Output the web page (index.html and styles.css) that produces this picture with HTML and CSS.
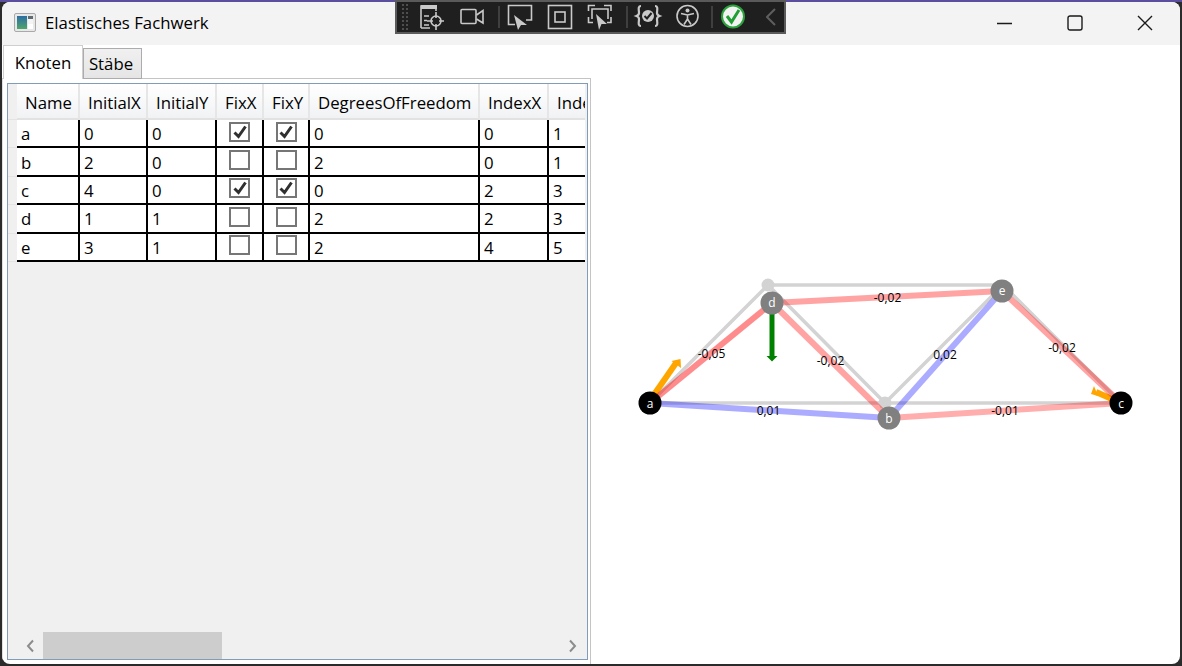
FILE: index.html
```html
<!DOCTYPE html>
<html lang="de">
<head>
<meta charset="utf-8">
<title>Elastisches Fachwerk</title>
<link rel="stylesheet" href="styles.css">
</head>
<body>
<div class="window">
  <header class="titlebar">
    <div class="appicon"><span class="appicon-left"></span><span class="appicon-right"></span></div>
    <span class="title">Elastisches Fachwerk</span>
    <div class="caption">
      <button class="capbtn"><svg width="16" height="16" viewBox="0 0 16 16"><path d="M0 8.500H15" class="capstroke"/></svg></button>
      <button class="capbtn"><svg width="16" height="16" viewBox="0 0 16 16"><rect x="1" y="1" width="14" height="14" rx="2" class="capstroke"/></svg></button>
      <button class="capbtn"><svg width="16" height="16" viewBox="0 0 16 16"><path d="M1 1L15 15M15 1L1 15" class="capstroke"/></svg></button>
    </div>
  </header>
  <main class="content">
    <section class="leftpane">
      <div class="tabs">
        <div class="tab tab-active">Knoten</div>
        <div class="tab tab-idle">Stäbe</div>
      </div>
      <div class="tabpanel">
        <div class="datagrid">
          <div class="viewport">
            <div class="grid">
              <div class="corner"></div>
              <div class="th">Name</div><div class="th">InitialX</div><div class="th">InitialY</div><div class="th">FixX</div><div class="th">FixY</div><div class="th">DegreesOfFreedom</div><div class="th">IndexX</div><div class="th">IndexY</div>

              <div class="rh"></div>
              <div class="td">a</div><div class="td">0</div><div class="td">0</div>
              <div class="td tc"><span class="cb"><svg viewBox="0 0 16 16" class="tick"><path d="M2.500 8.500L6.500 12.500L13.500 2.500"/></svg></span></div>
              <div class="td tc"><span class="cb"><svg viewBox="0 0 16 16" class="tick"><path d="M2.500 8.500L6.500 12.500L13.500 2.500"/></svg></span></div>
              <div class="td">0</div><div class="td">0</div><div class="td">1</div>

              <div class="rh"></div>
              <div class="td">b</div><div class="td">2</div><div class="td">0</div>
              <div class="td tc"><span class="cb"></span></div>
              <div class="td tc"><span class="cb"></span></div>
              <div class="td">2</div><div class="td">0</div><div class="td">1</div>

              <div class="rh"></div>
              <div class="td">c</div><div class="td">4</div><div class="td">0</div>
              <div class="td tc"><span class="cb"><svg viewBox="0 0 16 16" class="tick"><path d="M2.500 8.500L6.500 12.500L13.500 2.500"/></svg></span></div>
              <div class="td tc"><span class="cb"><svg viewBox="0 0 16 16" class="tick"><path d="M2.500 8.500L6.500 12.500L13.500 2.500"/></svg></span></div>
              <div class="td">0</div><div class="td">2</div><div class="td">3</div>

              <div class="rh"></div>
              <div class="td">d</div><div class="td">1</div><div class="td">1</div>
              <div class="td tc"><span class="cb"></span></div>
              <div class="td tc"><span class="cb"></span></div>
              <div class="td">2</div><div class="td">2</div><div class="td">3</div>

              <div class="rh"></div>
              <div class="td">e</div><div class="td">3</div><div class="td">1</div>
              <div class="td tc"><span class="cb"></span></div>
              <div class="td tc"><span class="cb"></span></div>
              <div class="td">2</div><div class="td">4</div><div class="td">5</div>
            </div>
          </div>
          <div class="hscroll">
            <svg class="arrow" width="10" height="14" viewBox="0 0 10 14"><path d="M8 1.500L3 7L8 12.500"/></svg>
            <div class="track"><div class="thumb"></div></div>
            <svg class="arrow" width="10" height="14" viewBox="0 0 10 14"><path d="M2 1.500L7 7L2 12.500"/></svg>
          </div>
        </div>
      </div>
    </section>
    <section class="canvas">
      <svg class="truss" viewBox="591 45 589 619" width="589" height="619">
        <g class="base">
          <path d="M650 403L768 285L885 403L1003 285L1121 403"/>
          <path d="M650 403H1121M768 285H1003"/>
          <circle cx="768" cy="285" r="6.500"/>
          <circle cx="885" cy="403" r="6.500"/>
        </g>
        <path class="force-orange" d="M651 399L676 363"/>
        <path class="force-head" d="M671.500 361L680.500 359L681 368Z"/>
        <path class="force-orange" d="M1121 403L1096 392"/>
        <path class="force-head" d="M1094 386L1091 394L1098 396Z"/>
        <line class="bar r1" x1="650" y1="403" x2="772" y2="303"/>
        <line class="bar r2" x1="772" y1="303" x2="889" y2="418"/>
        <line class="bar r2" x1="772" y1="303" x2="1002" y2="291"/>
        <line class="bar r2" x1="1002" y1="291" x2="1121" y2="403"/>
        <line class="bar r3" x1="889" y1="418" x2="1121" y2="403"/>
        <line class="bar b1" x1="650" y1="403" x2="889" y2="418"/>
        <line class="bar b1" x1="889" y1="418" x2="1002" y2="291"/>
        <path class="force-green" d="M772 303V357"/>
        <path class="force-green-head" d="M766.500 356H777.500L772 361.500Z"/>
        <text class="lbl" x="711.500" y="358">-0,05</text>
        <text class="lbl" x="830.500" y="365">-0,02</text>
        <text class="lbl" x="887.500" y="302">-0,02</text>
        <text class="lbl" x="945" y="359">0,02</text>
        <text class="lbl" x="1062" y="352">-0,02</text>
        <text class="lbl" x="768.500" y="415">0,01</text>
        <text class="lbl" x="1005" y="415">-0,01</text>
        <circle class="node-fixed" cx="650" cy="403" r="11.500"/>
        <circle class="node-fixed" cx="1121" cy="403" r="11.500"/>
        <circle class="node-free" cx="772" cy="303" r="11.500"/>
        <circle class="node-free" cx="889" cy="418" r="11.500"/>
        <circle class="node-free" cx="1002" cy="291" r="11.500"/>
        <text class="nodelbl" x="650" y="408">a</text>
        <text class="nodelbl" x="1121" y="408">c</text>
        <text class="nodelbl" x="772" y="307">d</text>
        <text class="nodelbl" x="889" y="423">b</text>
        <text class="nodelbl" x="1002" y="295">e</text>
      </svg>
    </section>
  </main>
</div>

<nav class="devbar">
  <span class="grip"></span>
  <svg class="ti first" viewBox="0 0 24 24"><path class="s" d="M1 23V1H16V6"/><path class="f" d="M1 0H17V4H1Z"/><path class="s" d="M4 11H9M4 15.500H7M4 20H9M1 23H10"/><circle class="s" cx="16" cy="16" r="5"/><path class="s" d="M16 7V13M16 19V25M7 16H13M19 16H24"/></svg>
  <svg class="ti" viewBox="0 0 24 24"><rect class="s" x="1" y="4.500" width="15" height="14" rx="1"/><path class="s" d="M16.500 10L23 5.500V18L16.500 14"/></svg>
  <i class="tsep"></i>
  <svg class="ti after" viewBox="0 0 24 24"><path class="s" d="M7 19.500H0.500V0.500H23.500V15H18"/><path class="f" d="M6 10L19 20H13L10 25Z"/></svg>
  <svg class="ti" viewBox="0 0 24 24"><rect class="s" x="0.500" y="0.500" width="23" height="23"/><rect class="s" x="7" y="7" width="10" height="10"/></svg>
  <svg class="ti" viewBox="0 0 24 24"><path class="s" d="M0.500 6V0.500H7M16 0.500H23V6M0.500 12V17.500H5M23 12V17.500H19"/><path class="s" d="M4 14V4H20V14"/><path class="f" d="M8 9L19 19H13.500L11 25Z"/></svg>
  <i class="tsep"></i>
  <svg class="ti after" viewBox="0 0 24 24"><path class="s thick" d="M5 1C1.500 1 3 5 3 8C3 10 0.500 11 0.500 11C0.500 11 3 12 3 14C3 17 1.500 21 5 21M19 1C22.500 1 21 5 21 8C21 10 23.500 11 23.500 11C23.500 11 21 12 21 14C21 17 22.500 21 19 21"/><circle cx="12" cy="11" r="6" class="gfill"/><path class="darkstroke" d="M8.500 11L11 13.500L15.500 8"/></svg>
  <svg class="ti" viewBox="0 0 24 24"><circle class="s" cx="11.500" cy="11" r="10.500"/><circle class="f" cx="11.500" cy="5.500" r="2"/><path class="s" d="M5 8.500L11.500 10L18 8.500M11.500 10V14M11.500 14L8 19.500M11.500 14L15 19.500"/></svg>
  <i class="tsep tight"></i>
  <svg class="ti after" viewBox="0 0 24 24"><circle cx="12" cy="11.500" r="11" class="okring"/><path class="okcheck" d="M6 11L10.500 17L18 5"/></svg>
  <svg class="chev" viewBox="0 0 10 18"><path d="M9 1L1 9L9 17"/></svg>
</nav>
</body>
</html>
```
FILE: styles.css
```css
* { box-sizing: border-box; }
html, body { margin: 0; height: 100%; }
body {
  background: linear-gradient(#5a4f9f 0 2px, #2b2b2b 2px);
  font-family: "Open Sans", "Noto Sans", sans-serif;
  font-size: 16.800px;
  color: #000;
  overflow: hidden;
  position: relative;
  padding: 2px;
}
.window {
  height: 662px;
  background: #fff;
  border-radius: 8px;
  display: flex;
  flex-direction: column;
  overflow: hidden;
}
.titlebar {
  height: 43px;
  background: #f3f3f3;
  display: flex;
  align-items: center;
  padding: 0 0 2px 12px;
  flex: none;
}
.appicon {
  width: 22px;
  height: 19px;
  border: 1px solid #a9a9a9;
  border-radius: 2px;
  background: #e8e8e8;
  padding: 2px;
  display: flex;
  gap: 1px;
}
.appicon-left { width: 10px; background: linear-gradient(#2b6ea5, #4fa56a); }
.appicon-right { flex: 1; background: linear-gradient(#f4f4f4 0 50%, #fff 50%); border-top: 3px solid #5f6b6f; }
.title { margin-left: 9px; }
.caption { margin-left: auto; display: flex; }
.capbtn {
  width: 70px;
  height: 41px;
  border: 0;
  background: none;
  padding: 0;
  display: flex;
  align-items: center;
  justify-content: center;
}
.capstroke { fill: none; stroke: #1a1a1a; stroke-width: 1.400; }

.content { flex: 1; display: flex; min-height: 0; }
.leftpane { width: 589px; flex: none; display: flex; flex-direction: column; }
.tabs { display: flex; align-items: flex-end; height: 34px; padding-left: 1px; position: relative; z-index: 1; flex: none; margin-bottom: -1px; }
.tab { display: flex; align-items: center; justify-content: center; }
.tab-active {
  width: 80px; height: 34px;
  background: #fff;
  border: 1px solid #cfcfcf;
  border-bottom: 0;
  padding-bottom: 1px;
}
.tab-idle {
  width: 59px; height: 31px;
  background: linear-gradient(#f0f0f0, #e5e5e5);
  border: 1px solid #acacac;
  padding-right: 3px;
}
.tabpanel {
  flex: 1;
  min-height: 0;
  border: 1px solid #c4c4c4;
  border-left-color: #e0e0e0;
  border-bottom: 0;
  padding: 4px 2px 4px 4px;
  display: flex;
}
.datagrid {
  flex: 1;
  border: 1px solid #7f9db9;
  background: #f0f0f0;
  display: flex;
  flex-direction: column;
  min-width: 0;
}
.viewport { flex: 1; min-height: 0; overflow: hidden; margin-right: 2px; }
.grid {
  display: grid;
  width: 640px;
  grid-template-columns: 9px 63px 68px 69px 47px 46px 170px 69px 99px;
  grid-template-rows: 36px;
  grid-auto-rows: 28.400px;
}
.corner, .rh { background: #f0f0f0; border-bottom: 1px solid #e4e4e4; }
.th {
  background: linear-gradient(#ffffff, #f1f2f4);
  border-right: 2px solid #e6e6e6;
  border-bottom: 2px solid #e2e2e2;
  display: flex;
  align-items: center;
  padding: 2px 0 0 8px;
  white-space: nowrap;
}
.td {
  background: #fff;
  border-right: 2px solid #000;
  border-bottom: 2px solid #000;
  padding: 1px 0 0 4px;
  display: flex;
  align-items: center;
  white-space: nowrap;
}
.tc { justify-content: center; padding: 0 0 3px 0; }
.cb {
  width: 21px;
  height: 20px;
  border: 2px solid #767676;
  background: #fff;
  display: flex;
  align-items: center;
  justify-content: center;
}
.tick { width: 16px; height: 16px; }
.tick path { fill: none; stroke: #303030; stroke-width: 3; }
.hscroll { height: 27px; flex: none; display: flex; align-items: center; }
.arrow { flex: none; margin: 0 6px; }
.arrow path { fill: none; stroke: #8c8c8c; stroke-width: 2; }
.track { flex: 1; height: 100%; }
.hscroll .arrow:first-child { margin: 0 8px 0 17px; }
.hscroll .arrow:last-child { margin: 0 9px 0 0; }
.thumb { width: 179px; height: 100%; background: #cdcdcd; }

.canvas { flex: 1; min-width: 0; }
.truss { display: block; }
.base path { fill: none; stroke: #d3d3d3; stroke-width: 3.500; }
.base circle { fill: #d3d3d3; }
.bar { stroke-width: 6; }
.r1 { stroke: #ff0000; stroke-opacity: .45; }
.r2 { stroke: #ff0000; stroke-opacity: .36; }
.r3 { stroke: #ff0000; stroke-opacity: .32; }
.b1 { stroke: #0000ff; stroke-opacity: .33; }
.force-orange { stroke: #ffa500; stroke-width: 6; fill: none; }
.force-head { fill: #ffa500; }
.force-green { stroke: #008000; stroke-width: 5; fill: none; }
.force-green-head { fill: #008000; }
.lbl { font-family: "Open Sans", sans-serif; font-size: 12px; text-anchor: middle; fill: #000; }
.nodelbl { font-family: "Open Sans", sans-serif; font-size: 12px; text-anchor: middle; fill: #fff; }
.node-fixed { fill: #000; }
.node-free { fill: #808080; }

.devbar {
  position: absolute;
  left: 395px;
  top: 0;
  width: 391px;
  height: 34px;
  background: #1f1f1f;
  border: 2px solid #5a5a5a;
  display: flex;
  align-items: center;
}
.grip {
  width: 8px;
  height: 28px;
  margin-left: 4px;
  background-image: radial-gradient(#4e4e4e 1.300px, transparent 1.500px);
  background-size: 4px 4px;
}
.ti { width: 24px; height: 24px; margin-left: 16px; flex: none; overflow: visible; }
.ti.first { margin-left: 11px; }
.ti.after { margin-left: 8px; }
.tsep { width: 2px; height: 22px; margin-left: 14px; background: #3f3f3f; flex: none; }
.tsep.tight { margin-left: 11px; }
.s { fill: none; stroke: #c9c9c9; stroke-width: 1.600; }
.s.thick { stroke-width: 2.200; }
.f { fill: #c9c9c9; }
.gfill { fill: #c9c9c9; }
.darkstroke { fill: none; stroke: #1f1f1f; stroke-width: 2; }
.okring { fill: #f2f2f2; stroke: #2ba33c; stroke-width: 2; }
.okcheck { fill: none; stroke: #1f9e33; stroke-width: 3; }
.chev { width: 10px; height: 18px; margin-left: 21px; flex: none; }
.chev path { fill: none; stroke: #5e5e5e; stroke-width: 2; }
```
